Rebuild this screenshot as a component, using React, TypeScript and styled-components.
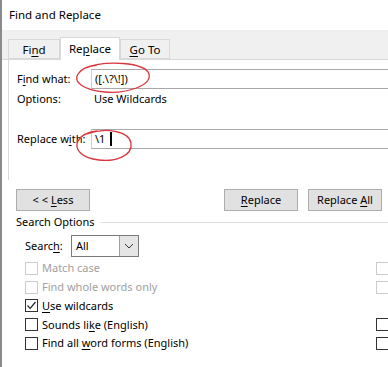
import React from "react";
import styled, { createGlobalStyle } from "styled-components";

const GlobalStyle = createGlobalStyle`
  html, body {
    margin: 0;
    padding: 0;
    background: #ffffff;
    overflow: hidden;
  }
  body {
    font-family: "Noto Sans", "Open Sans", sans-serif;
    font-size: 11px;
    line-height: 16px;
    color: #000000;
  }
`;

const Window = styled.div`
  position: relative;
  width: 388px;
  height: 367px;
  overflow: hidden;
  background: #ffffff;
  border-left: 2px solid #8a8a8a;
  box-sizing: border-box;
  white-space: nowrap;
`;

const TitleBar = styled.div`
  height: 30px;
  display: flex;
  align-items: center;
  padding-left: 7px;
  background: #ffffff;
  font-size: 11.5px;
`;

const TabStrip = styled.div`
  height: 30px;
  display: flex;
  align-items: flex-end;
  padding-left: 6px;
  background: #f0f0f0;
  border-bottom: 1px solid #d9d9d9;
  box-sizing: border-box;
`;

const Tab = styled.div<{ $active?: boolean; $width: number }>`
  width: ${(p) => p.$width}px;
  height: ${(p) => (p.$active ? 23 : 20)}px;
  margin-bottom: ${(p) => (p.$active ? -1 : 0)}px;
  display: flex;
  align-items: center;
  justify-content: center;
  box-sizing: border-box;
  background: ${(p) => (p.$active ? "#ffffff" : "#f0f0f0")};
  border: 1px solid #d9d9d9;
  border-bottom: ${(p) => (p.$active ? "none" : "1px solid #d9d9d9")};
  padding-top: ${(p) => (p.$active ? 0 : 1)}px;
  font-size: 11.5px;
`;

const Panel = styled.div`
  margin-left: 6px;
  border-left: 1px solid #d9d9d9;
  padding: 9px 0 0 8px;
  height: 120px;
  box-sizing: border-box;
`;

const FieldRow = styled.div`
  display: flex;
  align-items: center;
  height: 20px;
`;

const Label = styled.div`
  width: 74px;
  flex-shrink: 0;
`;

const TextBox = styled.div`
  flex: 1;
  height: 20px;
  box-sizing: border-box;
  border: 1px solid #a8a8a8;
  border-left-color: #d0d0d0;
  border-right: none;
  display: flex;
  align-items: center;
  padding-left: 3px;
`;

const OptionsRow = styled.div`
  display: flex;
  align-items: center;
  height: 20px;
  margin-bottom: 20px;
`;

const OptionValue = styled.span`
  padding-left: 3px;
`;

const Caret = styled.span`
  display: inline-block;
  width: 2px;
  height: 14px;
  background: #000;
  margin-left: 5px;
`;

const U = styled.span`
  text-decoration: underline;
  text-underline-offset: 2px;
`;

const ButtonRow = styled.div`
  display: flex;
  align-items: center;
  padding: 9px 0 0 14px;
`;

const Button = styled.div<{ $gap?: number }>`
  width: 74px;
  height: 22px;
  box-sizing: border-box;
  background: #e1e1e1;
  border: 1px solid #adadad;
  display: flex;
  align-items: center;
  justify-content: center;
  margin-left: ${(p) => p.$gap ?? 0}px;
`;

const SectionHead = styled.div`
  display: flex;
  align-items: center;
  gap: 6px;
  padding-left: 14px;
  margin-top: 1px;
  height: 20px;
  &::after {
    content: "";
    flex: 1;
    height: 1px;
    background: #dcdcdc;
  }
`;

const SearchRow = styled.div`
  display: flex;
  align-items: center;
  padding-left: 23px;
  margin-top: 3px;
  height: 22px;
`;

const SearchLabel = styled.div`
  width: 46px;
`;

const Select = styled.div`
  width: 68px;
  height: 22px;
  box-sizing: border-box;
  border: 1px solid #7a7a7a;
  display: flex;
  align-items: stretch;
  background: #fff;
`;

const SelectValue = styled.div`
  flex: 1;
  display: flex;
  align-items: center;
  padding-left: 4px;
`;

const SelectArrow = styled.div`
  width: 18px;
  border-left: 1px solid #a0a0a0;
  background: #e5e5e5;
  display: flex;
  align-items: center;
  justify-content: center;
`;

const CheckList = styled.div`
  display: flex;
  flex-direction: column;
  padding: 2px 0 0 23px;
`;

const CheckRow = styled.div<{ $disabled?: boolean }>`
  height: 18.75px;
  display: flex;
  align-items: center;
  gap: 4px;
  color: ${(p) => (p.$disabled ? "#a0a0a0" : "#000")};
`;

const Box = styled.div<{ $disabled?: boolean }>`
  width: 13px;
  height: 13px;
  box-sizing: border-box;
  border: 1px solid ${(p) => (p.$disabled ? "#cccccc" : "#333333")};
  background: #fff;
  display: flex;
  align-items: center;
  justify-content: center;
`;

const RightBoxes = styled.div`
  position: absolute;
  left: 374px;
  top: 259px;
  display: flex;
  flex-direction: column;
`;

const RightSlot = styled.div`
  height: 18.75px;
  display: flex;
  align-items: center;
`;

const Ellipse = styled.svg`
  position: absolute;
  pointer-events: none;
  overflow: visible;
`;

const checks = [
  { label: "Match case", disabled: true },
  { label: "Find whole words only", disabled: true },
  { label: "Use wildcards", checked: true, u: 0 },
  { label: "Sounds like (English)", u: 9 },
  { label: "Find all word forms (English)", u: 9 },
];

function Underlined({ text, at }: { text: string; at?: number }) {
  if (at === undefined) return <>{text}</>;
  return (
    <>
      {text.slice(0, at)}
      <U>{text[at]}</U>
      {text.slice(at + 1)}
    </>
  );
}

export default function App() {
  return (
    <>
      <GlobalStyle />
      <Window>
        <TitleBar>Find and Replace</TitleBar>
        <TabStrip>
          <Tab $width={52}>
            <span>
              Fi<U>n</U>d
            </span>
          </Tab>
          <Tab $active $width={60}>
            <span>
              Re<U>p</U>lace
            </span>
          </Tab>
          <Tab $width={50}>
            <span>
              <U>G</U>o To
            </span>
          </Tab>
        </TabStrip>
        <Panel>
          <FieldRow>
            <Label>
              F<U>i</U>nd what:
            </Label>
            <TextBox>([.\?\!])</TextBox>
          </FieldRow>
          <OptionsRow>
            <Label>Options:</Label>
            <OptionValue>Use Wildcards</OptionValue>
          </OptionsRow>
          <FieldRow>
            <Label>
              Replace w<U>i</U>th:
            </Label>
            <TextBox>
              <span>\1</span>
              <Caret />
            </TextBox>
          </FieldRow>
        </Panel>
        <ButtonRow>
          <Button>
            <span>
              &lt; &lt; <U>L</U>ess
            </span>
          </Button>
          <Button $gap={134}>
            <span>
              <U>R</U>eplace
            </span>
          </Button>
          <Button $gap={10}>
            <span>
              Replace <U>A</U>ll
            </span>
          </Button>
        </ButtonRow>
        <SectionHead>Search Options</SectionHead>
        <SearchRow>
          <SearchLabel>
            Searc<U>h</U>:
          </SearchLabel>
          <Select>
            <SelectValue>All</SelectValue>
            <SelectArrow>
              <svg width="10" height="6" viewBox="0 0 10 6">
                <path d="M1 1 L5 5 L9 1" fill="none" stroke="#333" strokeWidth="1" />
              </svg>
            </SelectArrow>
          </Select>
        </SearchRow>
        <CheckList>
          {checks.map((c) => (
            <CheckRow key={c.label} $disabled={c.disabled}>
              <Box $disabled={c.disabled}>
                {c.checked && (
                  <svg width="11" height="11" viewBox="0 0 11 11">
                    <path d="M1.5 5.5 L4.2 8.3 L9.5 2" fill="none" stroke="#222" strokeWidth="1.2" />
                  </svg>
                )}
              </Box>
              <span>
                <Underlined text={c.label} at={c.u} />
              </span>
            </CheckRow>
          ))}
        </CheckList>
        <RightBoxes>
          <RightSlot><Box $disabled /></RightSlot>
          <RightSlot><Box $disabled /></RightSlot>
          <RightSlot />
          <RightSlot><Box /></RightSlot>
          <RightSlot><Box /></RightSlot>
        </RightBoxes>
        <Ellipse style={{ left: 73, top: 62 }} width="76" height="32">
          <path
            d="M10 6 C 30 -2, 70 0, 74 12 C 77 24, 50 32, 30 30 C 8 28, -2 20, 3 12 C 6 7, 14 4, 22 3"
            fill="none"
            stroke="#d9363e"
            strokeWidth="1.3"
          />
        </Ellipse>
        <Ellipse style={{ left: 73, top: 129 }} width="58" height="34">
          <path
            d="M12 5 C 30 -2, 54 2, 56 14 C 58 27, 40 33, 24 31 C 6 29, -1 20, 3 12 C 6 6, 14 3, 22 2"
            fill="none"
            stroke="#d9363e"
            strokeWidth="1.3"
          />
        </Ellipse>
      </Window>
    </>
  );
}
